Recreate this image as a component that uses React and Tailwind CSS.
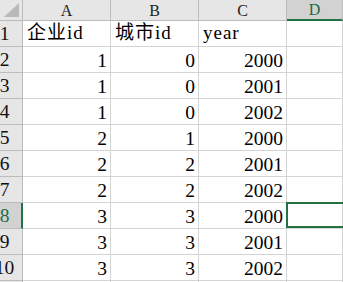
import React from "react";

const rows = [
  ["企业id", "城市id", "year"],
  [1, 0, 2000],
  [1, 0, 2001],
  [1, 0, 2002],
  [2, 1, 2000],
  [2, 2, 2001],
  [2, 2, 2002],
  [3, 3, 2000],
  [3, 3, 2001],
  [3, 3, 2002],
  ["", "", ""],
];

const cols = ["A", "B", "C", "D"];
const SELECTED_ROW = 8;

const serif = { fontFamily: '"Liberation Serif", "Noto Sans CJK SC", serif' };

function Corner() {
  return (
    <div className="relative h-[21px] border-r border-b border-[#bcbcbc] bg-[#e6e6e6]">
      <svg className="absolute left-[4px] top-[3px]" width="15" height="14" viewBox="0 0 15 14">
        <polygon points="15,0 15,14 0,14" fill="#b9b9b9" />
      </svg>
    </div>
  );
}

function ColHeader({ label }) {
  const active = label === "D";
  return (
    <div
      className={
        "flex h-[21px] items-center justify-center border-r border-b text-[16px] leading-none " +
        (active
          ? "bg-[#d2d2d2] border-r-[#bcbcbc] border-b-2 border-b-[#217346] text-[#1d6b45]"
          : "bg-[#e6e6e6] border-[#bcbcbc] text-[#222]")
      }
      style={serif}
    >
      <span className="pt-[1px]">{label}</span>
    </div>
  );
}

function RowHeader({ n }) {
  const active = n === SELECTED_ROW;
  return (
    <div
      className={
        "relative flex h-[26px] items-end overflow-hidden border-b border-[#bcbcbc] " +
        (active
          ? "bg-[#d2d2d2] border-r-2 border-r-[#217346] text-[#1d6b45]"
          : "bg-[#e6e6e6] border-r border-r-[#bcbcbc] text-[#111]")
      }
      style={serif}
    >
      <div className="flex w-[9px] justify-center pb-[2px] text-[19.5px] leading-[20px]">
        <span className="whitespace-nowrap">{n}</span>
      </div>
    </div>
  );
}

function Cell({ value, selected }) {
  const isNum = typeof value === "number";
  return (
    <div
      className={
        "relative flex h-[26px] items-end border-r border-b border-[#d4d4d4] bg-white text-black " +
        (isNum ? "justify-end pr-[3px]" : "justify-start pl-[4px]")
      }
      style={serif}
    >
      {isNum ? (
        <span className="pb-[1px] text-[19.5px] leading-[20px]">{value}</span>
      ) : (
        <span className="whitespace-nowrap pb-[3px] text-[19px] leading-[20px] tracking-[1px]">{value}</span>
      )}
      {selected && (
        <div className="pointer-events-none absolute -left-px -top-px h-[26px] w-[70px] border-2 border-[#217346]" />
      )}
    </div>
  );
}

export default function App() {
  return (
    <div className="h-[282px] w-[343px] overflow-hidden bg-white">
      <div className="grid grid-cols-[23px_88px_88px_88px_56px]">
        <Corner />
        {cols.map((c) => (
          <ColHeader key={c} label={c} />
        ))}
        {rows.map((r, i) => {
          const n = i + 1;
          return (
            <React.Fragment key={n}>
              <RowHeader n={n} />
              {r.map((v, j) => (
                <Cell key={j} value={v} />
              ))}
              <Cell value="" selected={n === SELECTED_ROW} />
            </React.Fragment>
          );
        })}
      </div>
    </div>
  );
}
